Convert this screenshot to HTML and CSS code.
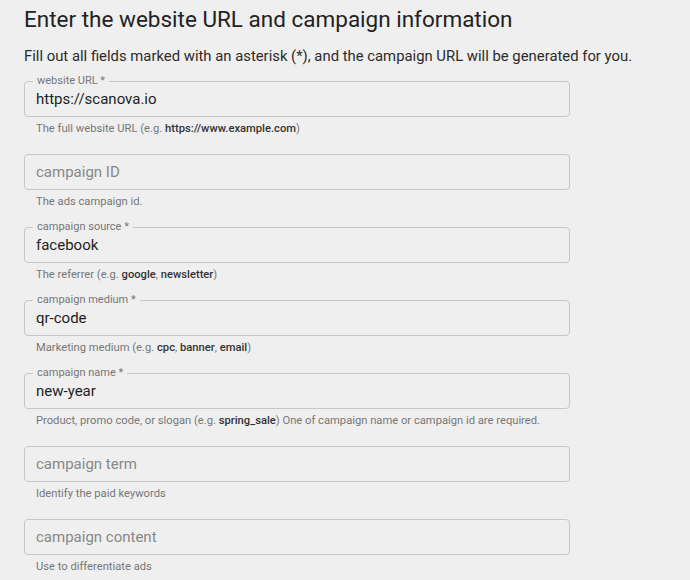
FILE: index.html
```html
<!DOCTYPE html>
<html>
<head>
<meta charset="utf-8">
<link rel="stylesheet" href="styles.css">
</head>
<body>
<main class="page">
  <h1 class="title">Enter the website URL and campaign information</h1>
  <p class="intro">Fill out all fields marked with an asterisk (*), and the campaign URL will be generated for you.</p>
  <div class="fields">
    <div class="field">
      <div class="box">
        <span class="label">website URL *</span>
        <span class="value">https://scanova.io</span>
      </div>
      <div class="help">The full website URL (e.g. <b>https://www.example.com</b>)</div>
    </div>
    <div class="field">
      <div class="box">
        <span class="placeholder">campaign ID</span>
      </div>
      <div class="help">The ads campaign id.</div>
    </div>
    <div class="field">
      <div class="box">
        <span class="label">campaign source *</span>
        <span class="value">facebook</span>
      </div>
      <div class="help">The referrer (e.g. <b>google</b>, <b>newsletter</b>)</div>
    </div>
    <div class="field">
      <div class="box">
        <span class="label">campaign medium *</span>
        <span class="value">qr-code</span>
      </div>
      <div class="help">Marketing medium (e.g. <b>cpc</b>, <b>banner</b>, <b>email</b>)</div>
    </div>
    <div class="field">
      <div class="box">
        <span class="label">campaign name *</span>
        <span class="value">new-year</span>
      </div>
      <div class="help">Product, promo code, or slogan (e.g. <b>spring_sale</b>) One of campaign name or campaign id are required.</div>
    </div>
    <div class="field">
      <div class="box">
        <span class="placeholder">campaign term</span>
      </div>
      <div class="help">Identify the paid keywords</div>
    </div>
    <div class="field">
      <div class="box">
        <span class="placeholder">campaign content</span>
      </div>
      <div class="help">Use to differentiate ads</div>
    </div>
  </div>
</main>
</body>
</html>
```
FILE: styles.css
```css
html, body {
  margin: 0;
  padding: 0;
  background: #efefef;
}
body {
  font-family: Roboto, "Liberation Sans", sans-serif;
  color: #222;
}
.page {
  padding: 5px 24px 0 24px;
}
.title {
  margin: 0;
  font-size: 22.5px;
  font-weight: 400;
  line-height: 28px;
  color: #222;
}
.intro {
  margin: 13px 0 0 0;
  font-size: 14.85px;
  line-height: 20px;
  color: #2c2c2c;
}
.fields {
  margin-top: 15px;
  width: 546px;
  display: flex;
  flex-direction: column;
  gap: 17px;
}
.box {
  position: relative;
  box-sizing: border-box;
  height: 36px;
  border: 1px solid #c6c6c6;
  border-radius: 4px;
  padding: 0 11px;
  display: flex;
  align-items: center;
}
.label {
  position: absolute;
  left: 8px;
  top: -8px;
  padding: 0 4px;
  font-size: 11px;
  line-height: 14px;
  color: #777;
  background: #efefef;
}
.value {
  font-size: 15px;
  color: #1e1e1e;
}
.placeholder {
  font-size: 15px;
  color: #888;
}
.help {
  margin-top: 4px;
  padding-left: 12px;
  font-size: 11.2px;
  line-height: 16px;
  color: #777;
}
.help b {
  font-weight: 500;
  color: #333;
}
```
